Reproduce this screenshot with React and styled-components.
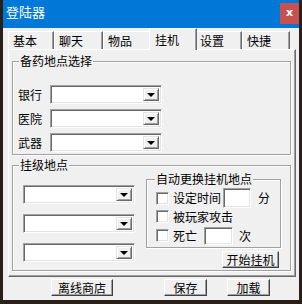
import React from "react";
import styled, { createGlobalStyle } from "styled-components";

const GlobalStyle = createGlobalStyle`
  html, body {
    margin: 0;
    padding: 0;
    background: #2a2019;
  }
  body {
    font-family: "Noto Sans CJK SC", "Liberation Sans", sans-serif;
    font-size: 12px;
    color: #000;
  }
`;

const tabs = [
  { label: "基本", width: 46 },
  { label: "聊天", width: 49 },
  { label: "物品", width: 48 },
  { label: "挂机", width: 48, active: true },
  { label: "设置", width: 47 },
  { label: "快捷", width: 48 },
];

const Window = styled.div`
  margin-left: 3px;
  width: 296px;
  height: 300px;
  background: #f0f0f0;
  display: flex;
  flex-direction: column;
`;

const TitleBar = styled.div`
  height: 28px;
  background: #0078d7;
  display: flex;
  align-items: flex-start;
  justify-content: space-between;
  padding-left: 3px;
`;

const Title = styled.span`
  color: #fff;
  font-size: 13px;
  line-height: 15px;
  margin-top: 4px;
`;

const CloseBtn = styled.div`
  width: 19px;
  height: 21px;
  margin-top: 3px;
  background: #c75050;
  color: #fff;
  font-family: "DejaVu Sans", sans-serif;
  font-weight: bold;
  font-size: 11px;
  line-height: 19px;
  text-align: center;
`;

const TabRow = styled.div`
  display: flex;
  align-items: flex-end;
  height: 21px;
  padding-left: 5px;
  position: relative;
  z-index: 1;
`;

const Tab = styled.div`
  box-sizing: border-box;
  width: ${(p) => p.$w}px;
  height: ${(p) => (p.$active ? 22 : 18)}px;
  margin: ${(p) => (p.$active ? "0 -2px -1px" : "0")};
  padding: ${(p) => (p.$active ? "3px 0 0 5px" : "1px 0 0 4px")};
  position: relative;
  z-index: ${(p) => (p.$active ? 2 : 1)};
  background: #f0f0f0;
  border-top: 1px solid #fff;
  border-left: 1px solid #fff;
  border-right: 1px solid #696969;
  box-shadow: inset -1px 0 0 #a0a0a0;
  line-height: 15px;
`;

const Panel = styled.div`
  box-sizing: border-box;
  margin-left: 5px;
  width: 288px;
  height: 228px;
  border: 1px solid;
  border-color: #fff #696969 #696969 #fff;
  box-shadow: inset -1px -1px 0 #a0a0a0;
  padding: 4px 4px 0 3px;
  display: flex;
  flex-direction: column;
  gap: 3px;
`;

const Group = styled.fieldset`
  box-sizing: border-box;
  margin: 0;
  min-width: 0;
  width: ${(p) => p.$w || "100%"};
  padding: ${(p) => p.$pad};
  border: 1px solid #a0a0a0;
  box-shadow: inset 1px 1px 0 #fff, 1px 1px 0 #fff;
`;

const Legend = styled.legend`
  margin-left: ${(p) => p.$x}px;
  padding: 0 1px;
  background: #f0f0f0;
  line-height: 14px;
`;

const Rows = styled.div`
  display: flex;
  flex-direction: column;
  gap: ${(p) => p.$gap}px;
`;

const FieldRow = styled.div`
  display: flex;
  align-items: center;
  gap: 8px;
`;

const Label = styled.span`
  width: 24px;
  line-height: 14px;
  white-space: nowrap;
`;

const ComboBox = styled.div`
  box-sizing: border-box;
  width: ${(p) => p.$w}px;
  height: ${(p) => p.$h}px;
  background: #fff;
  border: 1px solid;
  border-color: #a0a0a0 #fff #fff #a0a0a0;
  box-shadow: inset 1px 1px 0 #696969, inset -1px -1px 0 #e3e3e3;
  padding: 2px;
  display: flex;
  justify-content: flex-end;
`;

const DropButton = styled.div`
  box-sizing: border-box;
  width: 16px;
  background: #f0f0f0;
  border: 1px solid;
  border-color: #e3e3e3 #696969 #696969 #e3e3e3;
  box-shadow: inset 1px 1px 0 #fff, inset -1px -1px 0 #a0a0a0;
  display: flex;
  align-items: center;
  justify-content: center;

  &::after {
    content: "";
    border-left: 4px solid transparent;
    border-right: 4px solid transparent;
    border-top: 4px solid #000;
    margin-top: 1px;
  }
`;

const Columns = styled.div`
  display: flex;
  align-items: flex-start;
  gap: 11px;
`;

const LeftColumn = styled(Rows)`
  margin-top: 13px;
`;

const RightColumn = styled.div`
  width: 135px;
  display: flex;
  flex-direction: column;
  align-items: flex-end;
  gap: 3px;
`;

const OptionRow = styled.div`
  display: flex;
  align-items: center;
  height: ${(p) => p.$h}px;
  line-height: 14px;
  white-space: nowrap;
`;

const CheckBox = styled.span`
  box-sizing: border-box;
  width: 13px;
  height: 13px;
  margin-right: 4px;
  background: #fff;
  border: 1px solid;
  border-color: #a0a0a0 #fff #fff #a0a0a0;
  box-shadow: inset 1px 1px 0 #696969, inset -1px -1px 0 #e3e3e3;
`;

const NumberBox = styled.span`
  box-sizing: border-box;
  width: ${(p) => p.$w}px;
  height: ${(p) => p.$h}px;
  margin: 0 ${(p) => p.$after}px 0 ${(p) => p.$before}px;
  background: #fff;
  border: 1px solid;
  border-color: #a0a0a0 #fff #fff #a0a0a0;
  box-shadow: inset 1px 1px 0 #696969, inset -1px -1px 0 #e3e3e3;
`;

const Button = styled.div`
  box-sizing: border-box;
  width: ${(p) => p.$w}px;
  height: 17px;
  margin-left: ${(p) => p.$ml || 0}px;
  margin-right: ${(p) => p.$mr || 0}px;
  background: #f0f0f0;
  border: 1px solid;
  border-color: #fff #404040 #404040 #fff;
  box-shadow: inset -1px -1px 0 #a0a0a0;
  text-align: center;
  line-height: 15px;
`;

const ButtonRow = styled.div`
  display: flex;
  margin-top: 2px;
  padding-left: 48px;
`;

function Combo({ w = 112, h = 19 }) {
  return (
    <ComboBox $w={w} $h={h}>
      <DropButton />
    </ComboBox>
  );
}

export default function App() {
  return (
    <>
      <GlobalStyle />
      <Window>
        <TitleBar>
          <Title>登陆器</Title>
          <CloseBtn>x</CloseBtn>
        </TitleBar>

        <TabRow>
          {tabs.map((t) => (
            <Tab key={t.label} $w={t.width} $active={t.active}>
              {t.label}
            </Tab>
          ))}
        </TabRow>

        <Panel>
          <Group $pad="17px 4px 2px 5px">
            <Legend $x={1}>备药地点选择</Legend>
            <Rows $gap={5}>
              {["银行", "医院", "武器"].map((name) => (
                <FieldRow key={name}>
                  <Label>{name}</Label>
                  <Combo />
                </FieldRow>
              ))}
            </Rows>
          </Group>

          <Group $pad="0 4px 2px 10px">
            <Legend $x={-4}>挂级地点</Legend>
            <Columns>
              <LeftColumn $gap={10}>
                <Combo />
                <Combo />
                <Combo />
              </LeftColumn>
              <RightColumn>
                <Group $w="135px" $pad="2px 0 1px 9px">
                  <Legend $x={-1}>自动更换挂机地点</Legend>
                  <OptionRow $h={20}>
                    <CheckBox />
                    设定时间
                    <NumberBox $w={28} $h={20} $before={2} $after={7} />
                    分
                  </OptionRow>
                  <OptionRow $h={17}>
                    <CheckBox />
                    被玩家攻击
                  </OptionRow>
                  <OptionRow $h={21}>
                    <CheckBox />
                    死亡
                    <NumberBox $w={29} $h={18} $before={7} $after={6} />
                    次
                  </OptionRow>
                </Group>
                <Button $w={57} $mr={2}>开始挂机</Button>
              </RightColumn>
            </Columns>
          </Group>
        </Panel>

        <ButtonRow>
          <Button $w={62}>离线商店</Button>
          <Button $w={43} $ml={51}>保存</Button>
          <Button $w={43} $ml={20}>加载</Button>
        </ButtonRow>
      </Window>
    </>
  );
}
